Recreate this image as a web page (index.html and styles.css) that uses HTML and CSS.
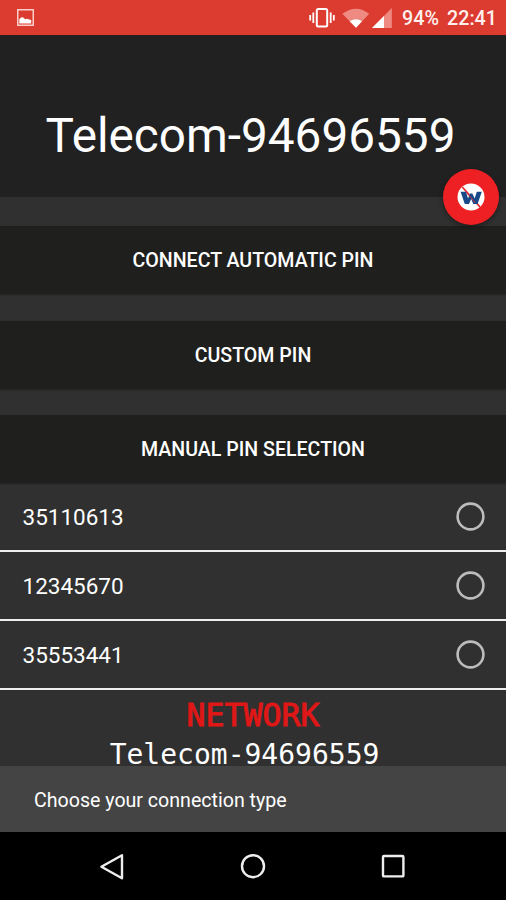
FILE: index.html
```html
<!DOCTYPE html>
<html lang="en">
<head>
<meta charset="utf-8">
<title>Telecom-94696559</title>
<link rel="stylesheet" href="styles.css">
</head>
<body>
<div class="screen">
  <header class="status">
    <svg class="status-picture" width="17" height="17" viewBox="0 0 17 17"><rect x=".75" y=".75" width="15.5" height="15.5" fill="none" stroke="#fbd0cb" stroke-width="1.5"/><path d="M2.3 14.5V10.2L4 8.5 6 8.2 8 10.2 10 9.8 12 10.5 14.2 11V14.5Z" fill="#fff"/></svg>
    <div class="status-right">
      <svg width="96" height="24" viewBox="0 0 96 24">
        <g fill="none" stroke="#fff" stroke-width="2"><rect x="16.8" y="3" width="10.4" height="17.4" rx="1.5"/><path d="M13.3 6.5V17M30.7 6.5V17" stroke-width="1.8"/><path d="M10.2 9V14.5M33.8 9V14.5" stroke-width="1.8"/></g>
        <path d="M42.3 7.8Q56 -2.5 69.2 7.8L56 21.8Z" fill="#ee8a82"/><path d="M49.7 15.2Q56 11.5 62 15.2L56 21.8Z" fill="#fff"/>
        <path d="M91.8 2V22H72Z" fill="#ee8a82"/><path d="M84 10V22H72Z" fill="#fff"/>
      </svg>
      <span class="battery">94%</span>
      <span class="clock">22:41</span>
    </div>
  </header>
  <div class="title">
    <h1>Telecom-94696559</h1>
    <div class="fab">
      <svg width="28" height="28" viewBox="0 0 28 28"><circle cx="14" cy="14" r="13.5" fill="#fff"/><path d="M5.5 4.2L23 24" stroke="#e5222b" stroke-width="1.7"/><path d="M3.6 8.8H9L11 15.5 13 10.5H15.3L17.7 15.5 19.8 8.8H24.8L20.6 21H16.3L14.2 16 12 21H7.8Z" fill="#174887"/><path d="M9.5 9.5L18.5 20" stroke="#c52c49" stroke-width="1"/></svg>
    </div>
  </div>
  <main>
    <button class="action">CONNECT AUTOMATIC PIN</button>
    <button class="action">CUSTOM PIN</button>
    <button class="action">MANUAL PIN SELECTION</button>
    <ul class="pins">
      <li><span>35110613</span><svg class="radio" viewBox="0 0 29 29"><circle cx="14.5" cy="14.5" r="12.9"/></svg></li>
      <li><span>12345670</span><svg class="radio" viewBox="0 0 29 29"><circle cx="14.5" cy="14.5" r="12.9"/></svg></li>
      <li><span>35553441</span><svg class="radio" viewBox="0 0 29 29"><circle cx="14.5" cy="14.5" r="12.9"/></svg></li>
    </ul>
    <section class="network"><h2>NETWORK</h2><p>Telecom-94696559</p></section>
  </main>
  <div class="snackbar">Choose your connection type</div>
  <nav class="navbar">
    <svg width="26" height="30" viewBox="0 0 26 30"><path d="M23 3.2V26.2L2.4 14.7Z" fill="none" stroke="#eee" stroke-width="2.4" stroke-linejoin="round"/></svg>
    <svg width="26" height="30" viewBox="0 0 26 30"><circle cx="13" cy="14.2" r="11" fill="none" stroke="#eee" stroke-width="2.4"/></svg>
    <svg width="26" height="30" viewBox="0 0 26 30"><rect x="3" y="4" width="20.4" height="20.4" rx="1" fill="none" stroke="#eee" stroke-width="2.4"/></svg>
  </nav>
</div>
</body>
</html>
```
FILE: styles.css
```css
* { box-sizing: border-box; margin: 0; padding: 0; }
body { background: #303030; color: #fff; font-family: Roboto, "Liberation Sans", sans-serif; }
svg { display: block; flex: none; }
.screen { width: 506px; height: 900px; display: flex; flex-direction: column; overflow: hidden; }
.status { height: 35px; flex: none; background: #dc3b30; display: flex; justify-content: space-between; padding: 0 10px 0 17px; }
.status-picture { margin-top: 9px; }
.status-right { display: flex; padding-top: 6px; font-size: 19.7px; font-weight: 500; line-height: 26px; color: #fff0ee; }
.battery { margin-left: 6px; width: 45px; }
.clock { width: 49px; white-space: nowrap; }
.title { position: relative; height: 162px; flex: none; background: #212121; border-top: 1px solid #2b1c1b; display: flex; justify-content: center; padding-top: 70px; }
h1 { font-weight: 400; font-size: 47.7px; line-height: 60px; white-space: nowrap; margin-right: 5px; }
.fab { position: absolute; right: 7px; bottom: -28px; width: 56px; height: 56px; border-radius: 50%; background: #ee2023; display: grid; place-items: center; box-shadow: 0 2px 5px rgba(0,0,0,.4); z-index: 2; }
main { height: 569px; flex: none; padding-top: 29px; }
.action { display: block; width: 100%; height: 68px; margin-bottom: 26.5px; padding-top: 2px; border: 0; background: #1f1f1d; color: #fff; font: 500 19.6px/66px Roboto, "Liberation Sans", sans-serif; text-align: center; box-shadow: 0 1px 2px rgba(0,0,0,.3); }
.pins { list-style: none; margin-top: -26.5px; }
.pins li { height: 69px; display: flex; align-items: center; justify-content: space-between; padding: 0 21px 0 22.5px; border-bottom: 2px solid #eee; font-size: 22.5px; }
.radio { width: 29px; height: 29px; fill: none; stroke: #bcbcbc; stroke-width: 2.6; }
.network { text-align: center; font-family: "DejaVu Sans Mono", monospace; padding-top: 3px; }
h2 { font-size: 31.6px; line-height: 44px; font-weight: 400; color: #e01717; -webkit-text-stroke: .9px #e01717; }
.network p { font-size: 28px; line-height: 36px; padding-right: 17px; white-space: nowrap; }
.snackbar { height: 66px; flex: none; background: #444; padding-left: 34px; font-size: 19.6px; line-height: 70px; }
.navbar { flex: 1; background: #000; display: flex; justify-content: space-between; padding: 20px 100px 0 99px; }
```
